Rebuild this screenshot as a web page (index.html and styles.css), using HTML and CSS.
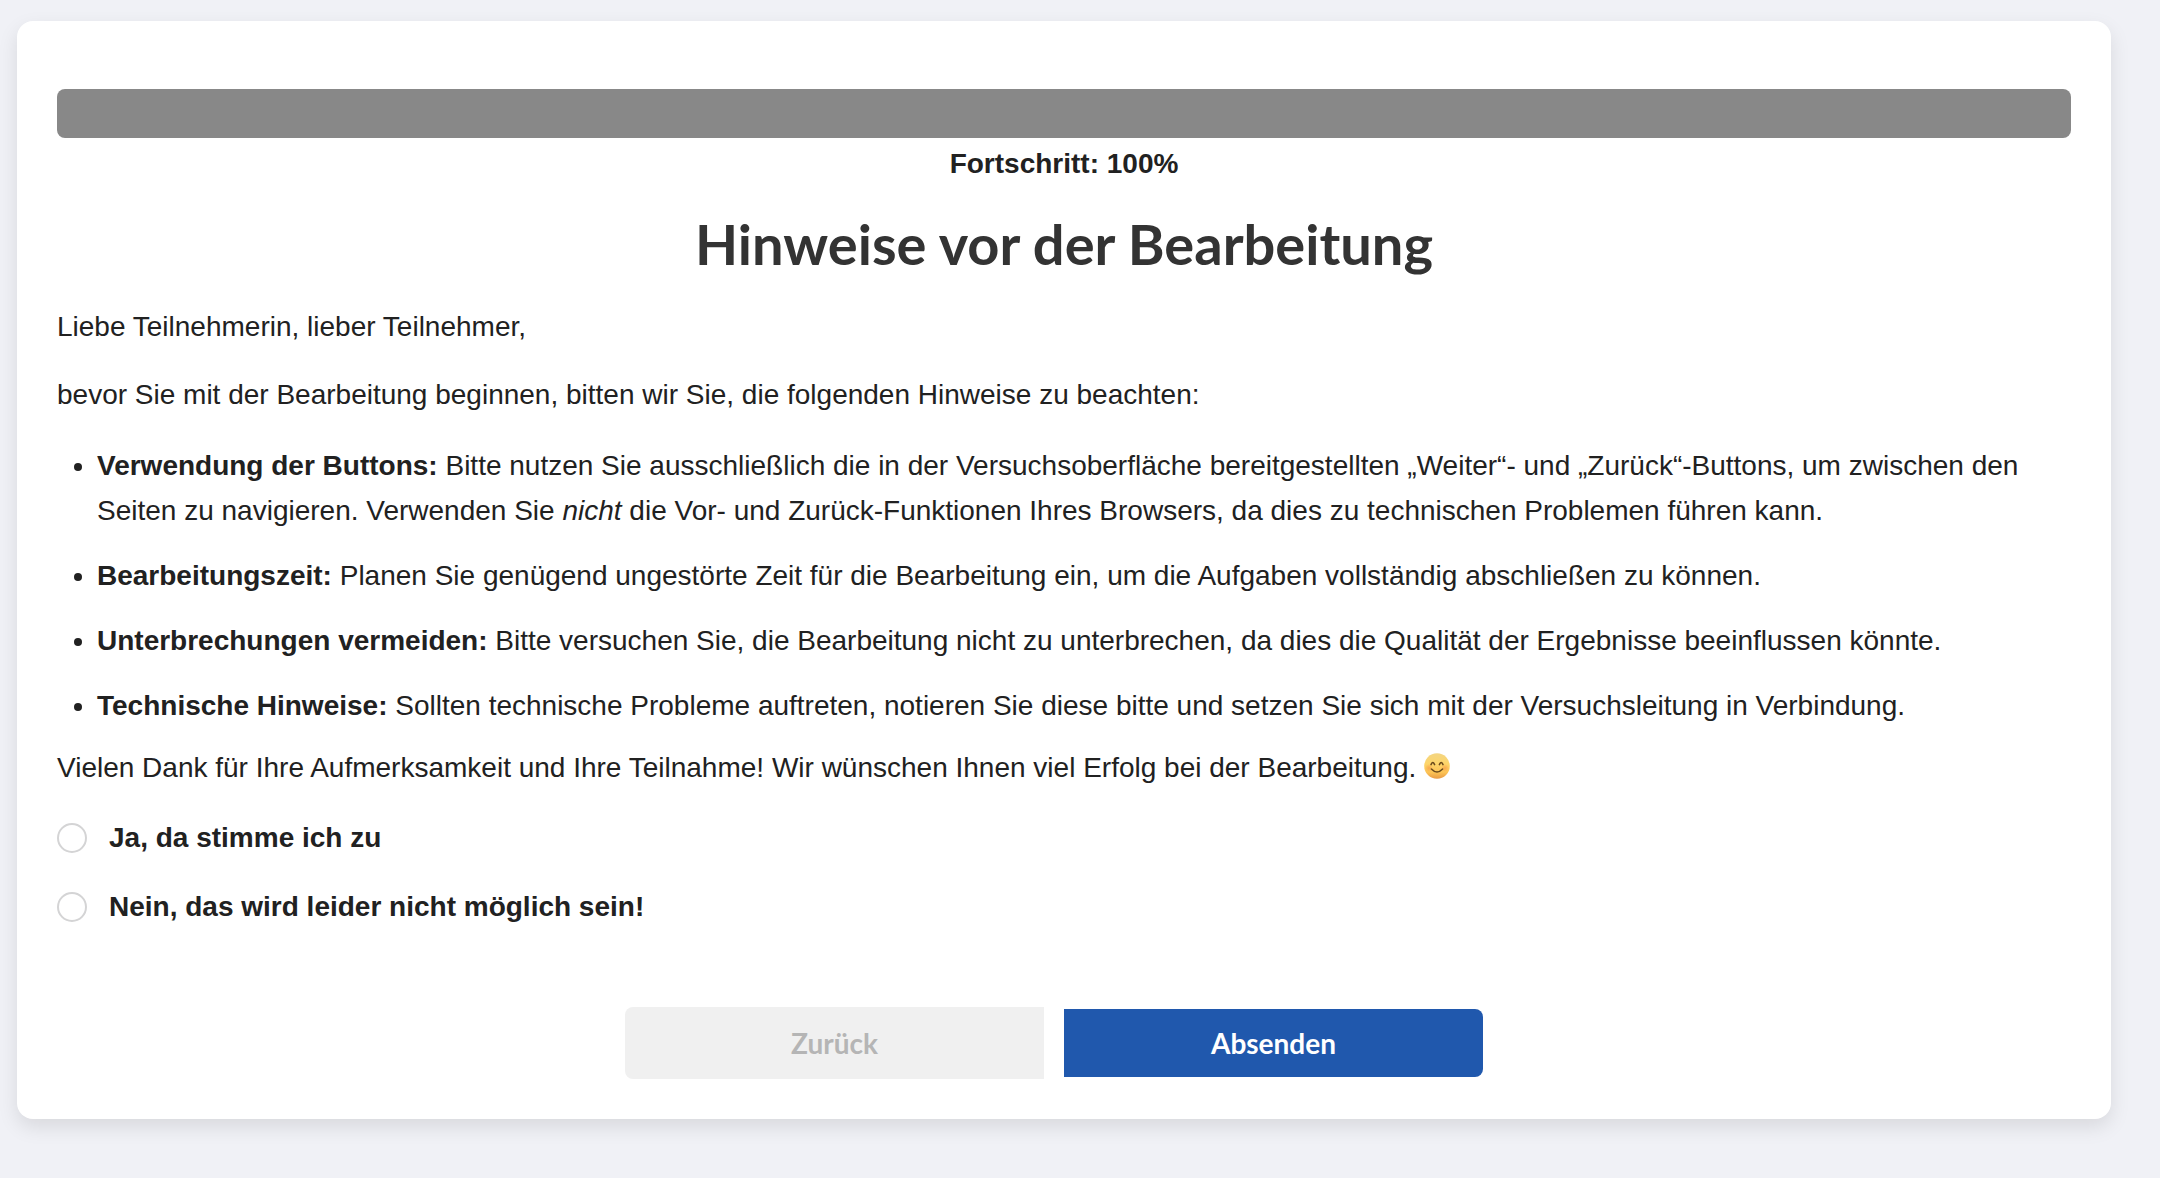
FILE: index.html
```html
<!DOCTYPE html>
<html lang="de">
<head>
<meta charset="utf-8">
<meta name="viewport" content="width=device-width, initial-scale=1">
<title>Hinweise vor der Bearbeitung</title>
<link rel="stylesheet" href="styles.css">
</head>
<body>
<main class="card">
  <div class="progress" role="progressbar" aria-labelledby="progress-label" aria-valuenow="100" aria-valuemin="0" aria-valuemax="100">
    <div class="progress-bar" style="width: 100%"></div>
  </div>
  <div class="progress-label" id="progress-label">Fortschritt: 100%</div>
  <h1 class="title">Hinweise vor der Bearbeitung</h1>
  <p class="text">Liebe Teilnehmerin, lieber Teilnehmer,</p>
  <p class="text">bevor Sie mit der Bearbeitung beginnen, bitten wir Sie, die folgenden Hinweise zu beachten:</p>
  <ul class="hints">
    <li><strong>Verwendung der Buttons:</strong> Bitte nutzen Sie ausschließlich die in der Versuchsoberfläche bereitgestellten „Weiter“- und „Zurück“-Buttons, um zwischen den Seiten zu navigieren. Verwenden Sie <em>nicht</em> die Vor- und Zurück-Funktionen Ihres Browsers, da dies zu technischen Problemen führen kann.</li>
    <li><strong>Bearbeitungszeit:</strong> Planen Sie genügend ungestörte Zeit für die Bearbeitung ein, um die Aufgaben vollständig abschließen zu können.</li>
    <li><strong>Unterbrechungen vermeiden:</strong> Bitte versuchen Sie, die Bearbeitung nicht zu unterbrechen, da dies die Qualität der Ergebnisse beeinflussen könnte.</li>
    <li><strong>Technische Hinweise:</strong> Sollten technische Probleme auftreten, notieren Sie diese bitte und setzen Sie sich mit der Versuchsleitung in Verbindung.</li>
  </ul>
  <p class="text">Vielen Dank für Ihre Aufmerksamkeit und Ihre Teilnahme! Wir wünschen Ihnen viel Erfolg bei der Bearbeitung. <svg class="smiley" viewBox="0 0 26 26" role="img" aria-label="Lächelndes Gesicht">
      <defs>
        <linearGradient id="face" x1="0" y1="0" x2="0" y2="1">
          <stop offset="0" stop-color="#f3d583"/>
          <stop offset=".4" stop-color="#fdd56a"/>
          <stop offset=".75" stop-color="#fcc355"/>
          <stop offset="1" stop-color="#e89a45"/>
        </linearGradient>
        <radialGradient id="cheek">
          <stop offset="0" stop-color="#f5873f" stop-opacity=".5"/>
          <stop offset="1" stop-color="#f5873f" stop-opacity="0"/>
        </radialGradient>
      </defs>
      <circle cx="13" cy="13" r="12.8" fill="url(#face)"/>
      <circle cx="5" cy="15" r="4" fill="url(#cheek)"/>
      <circle cx="21" cy="15" r="4" fill="url(#cheek)"/>
      <path d="M7 11.6Q8.8 7.2 10.6 11.6M15.4 11.6Q17.2 7.2 19 11.6M7.4 16Q13 22 18.6 16" fill="none" stroke="#6b4a1c" stroke-width="1.5" stroke-linecap="round" stroke-linejoin="round"/>
    </svg></p>
  <form class="form">
    <label class="option"><input class="radio" type="radio" name="consent" value="ja">Ja, da stimme ich zu</label>
    <label class="option"><input class="radio" type="radio" name="consent" value="nein">Nein, das wird leider nicht möglich sein!</label>
    <div class="buttons">
      <button class="button button-back" type="button">Zurück</button>
      <button class="button button-submit" type="submit">Absenden</button>
    </div>
  </form>
</main>
</body>
</html>
```
FILE: styles.css
```css
*, *::before, *::after {
  box-sizing: border-box;
}

body {
  margin: 0;
  padding: 21px 49px 58px 17px;
  background: #f0f1f6;
  color: #212121;
  font-family: "Liberation Sans", Arial, sans-serif;
  font-size: 28px;
  line-height: 40px;
}

.card {
  padding: 68px 40px 40px;
  border-radius: 16px;
  background: #fff;
  box-shadow: 0 8px 20px rgba(0, 0, 0, .1);
}

.progress {
  overflow: hidden;
  border-radius: 8px;
  background: #e6e6e6;
}

.progress-bar {
  height: 49px;
  background: #888;
}

.progress-label {
  margin-top: 6px;
  font-weight: 700;
  text-align: center;
}

.title {
  margin: 24px 0 27px;
  color: #333;
  font-family: Lato, sans-serif;
  font-size: 56px;
  font-weight: 700;
  line-height: 72px;
  text-align: center;
}

.text {
  margin: 0 0 28px;
}

.hints {
  display: flex;
  flex-direction: column;
  gap: 20px;
  margin: 0 0 20px;
  padding-left: 40px;
  line-height: 45px;
}

.smiley {
  width: 26px;
  height: 26px;
  vertical-align: -2px;
}

.form {
  display: flex;
  flex-direction: column;
  align-items: flex-start;
}

.option {
  display: flex;
  align-items: center;
  gap: 22px;
  margin: 2px 0 27px;
  font-weight: 700;
}

.radio {
  flex: none;
  width: 30px;
  height: 30px;
  margin: 0;
  border: 2px solid #d4d4d5;
  border-radius: 50%;
  background: #fff;
  appearance: none;
}

.radio:checked {
  border: 9px solid #2058ad;
}

.buttons {
  display: flex;
  align-items: center;
  align-self: center;
  margin-top: 53px;
}

.button {
  width: 419px;
  margin-right: 20px;
  padding: 16px 20px;
  border: 0;
  font: 700 28px/36px Lato, sans-serif;
}

.button-back {
  padding: 18px 20px;
  border-radius: 8px 0 0 8px;
  background: #f0f0f0;
  color: #b5b5b5;
}

.button-submit {
  border-radius: 0 8px 8px 0;
  background: #2058ad;
  color: #fff;
}
```
